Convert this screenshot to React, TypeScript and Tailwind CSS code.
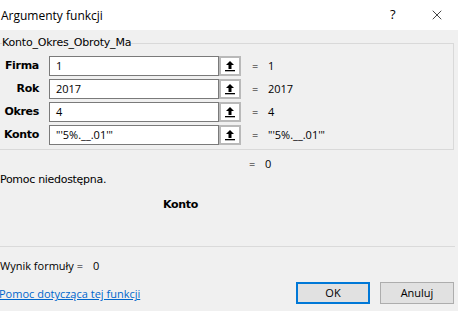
import { X } from "lucide-react";

const args = [
  { name: "Firma", value: "1", result: "1" },
  { name: "Rok", value: "2017", result: "2017" },
  { name: "Okres", value: "4", result: "4" },
  { name: "Konto", value: "\"'5%.__.01'\"", result: "\"'5%.__.01'\"" },
];

function CollapseIcon() {
  return (
    <svg width="10" height="12" viewBox="0 0 10 12">
      <path d="M5 1 L9 5 L6.5 5 L6.5 9 L3.5 9 L3.5 5 L1 5 Z" fill="#000" />
      <rect x="0" y="10" width="10" height="1.3" fill="#000" />
    </svg>
  );
}

export default function App() {
  return (
    <div className="w-[458px] h-[311px] overflow-hidden bg-[#f0f0f0] text-black font-['Liberation_Sans',sans-serif] text-[11px]">
      {/* TITLE BAR */}
      <div className="h-[30px] bg-white flex items-center">
        <span className="flex-1 text-[12px] font-['Open_Sans',sans-serif] pl-[1px] pt-[1px]">Argumenty funkcji</span>
        <span className="text-[13px] w-[14px] mr-[25px] font-['Open_Sans',sans-serif]">?</span>
        <X className="w-[16px] h-[16px] mr-[13px]" strokeWidth={1.1} />
      </div>

      {/* GROUP */}
      <fieldset className="mt-[6px] -ml-[2px] mr-[4px] border border-[#d9d9d9] h-[114px] px-0 pt-0 pb-0">
        <legend className="ml-[3px] px-0 text-[11px] leading-[14px] font-['DejaVu_Sans',sans-serif] tracking-[-0.2px]">Konto_Okres_Obroty_Ma</legend>
        <div className="flex flex-col gap-[3px] mt-[6px]">
          {args.map((a) => (
            <div key={a.name} className="flex items-center h-[20px]">
              <span className="w-[40px] text-right font-bold text-[11px] font-['DejaVu_Sans',sans-serif] tracking-[-0.3px]">{a.name}</span>
              <div className="ml-[10px] w-[170px] h-[20px] border border-[#7a7a7a] bg-white flex items-center pl-[6px] font-['Open_Sans',sans-serif] text-[11px]">
                {a.value}
              </div>
              <div className="w-[22px] h-[20px] border-2 border-[#b9b9b9] bg-white flex items-center justify-center">
                <CollapseIcon />
              </div>
              <span className="ml-[11px] w-[16px] font-['Open_Sans',sans-serif]">=</span>
              <span className="font-['Open_Sans',sans-serif]">{a.result}</span>
            </div>
          ))}
        </div>
      </fieldset>

      {/* RESULT */}
      <div className="flex h-[16px] items-center mt-[6px] font-['Open_Sans',sans-serif]">
        <span className="ml-[249px] w-[16px]">=</span>
        <span>0</span>
      </div>
      <div className="h-[16px] mt-[0px] flex items-center font-['DejaVu_Sans',sans-serif] tracking-[-0.3px]">Pomoc niedostępna.</div>
      <div className="h-[16px] mt-[9px] flex items-center pl-[163px] font-bold font-['DejaVu_Sans',sans-serif] tracking-[-0.3px]">Konto</div>

      {/* FOOTER */}
      <div className="mt-[33px] mr-[3px] border-t border-[#dadada]" />
      <div className="h-[16px] mt-[11px] flex items-center font-['Open_Sans',sans-serif] text-[11px]">
        <span>Wynik formuły =</span>
        <span className="ml-[10px]">0</span>
      </div>
      <div className="flex items-center mt-[8px]">
        <a className="flex-1 text-[#0066cc] underline font-['Open_Sans',sans-serif] text-[11px] -ml-[1px] pt-[3px]">Pomoc dotycząca tej funkcji</a>
        <button className="w-[74px] h-[22px] border-2 border-[#0078d7] bg-[#e1e1e1] font-['Open_Sans',sans-serif] text-[11px]">OK</button>
        <button className="ml-[10px] mr-[4px] w-[74px] h-[22px] border border-[#adadad] bg-[#e1e1e1] font-['Open_Sans',sans-serif] text-[11px]">Anuluj</button>
      </div>
    </div>
  );
}
